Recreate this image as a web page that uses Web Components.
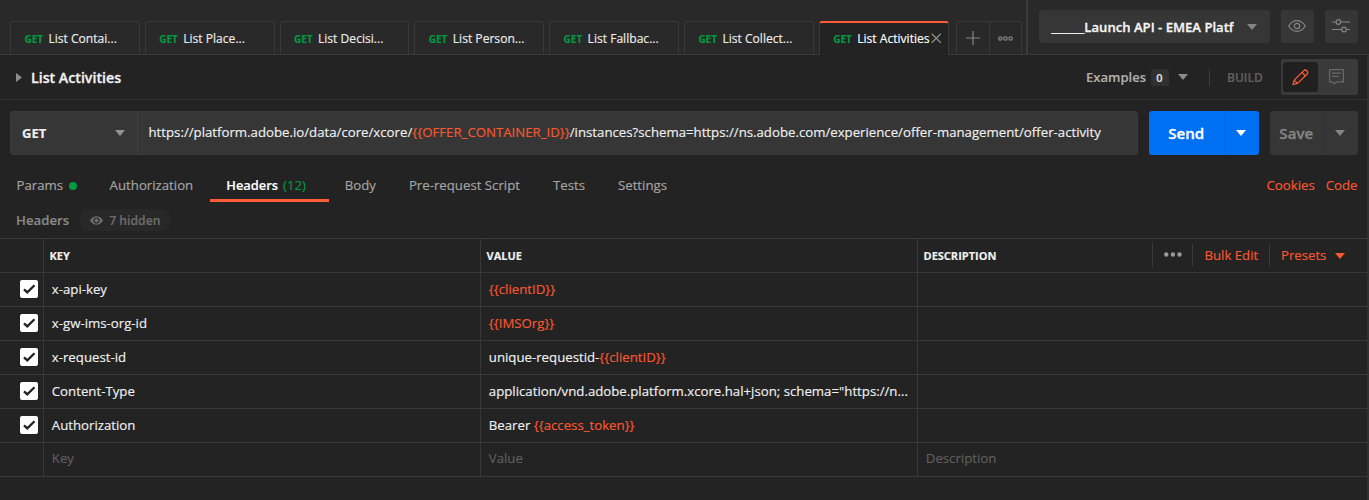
<!DOCTYPE html>
<html lang="en">
<head>
<meta charset="utf-8">
<title>List Activities</title>
<style>
html,body{margin:0;height:500px;overflow:hidden;background:#232323}
body{font:13.225px/18px "Open Sans",sans-serif;color:#f0f0f0;-webkit-text-stroke:.15px}
</style>
</head>
<body>
<api-client></api-client>
<script>
const define = (name, html) => customElements.define(name, class extends HTMLElement {
  connectedCallback() {
    if (this.shadowRoot) return;
    const t = document.createElement('template');
    t.innerHTML = typeof html === 'function' ? html(this) : html;
    this.attachShadow({mode: 'open'}).append(t.content.cloneNode(true));
  }
});

const icons = {
  caret: '<path d="M0 0h10L5 6z" fill="currentColor"/>',
  right: '<path d="M0 0v9l6-4.500z" fill="currentColor"/>',
  close: '<path d="M.7.700 9.800 9.800M9.800.700.700 9.800" stroke="currentColor" stroke-width="1.300"/>',
  plus: '<path d="M7 0v14M0 7h14" stroke="currentColor" stroke-width="1.200"/>',
  rings: '<g fill="none" stroke="currentColor" stroke-width="1.200"><circle cx="2.400" cy="2.500" r="1.700"/><circle cx="7.500" cy="2.500" r="1.700"/><circle cx="12.600" cy="2.500" r="1.700"/></g>',
  dots: '<g fill="currentColor"><circle cx="2.300" cy="2.500" r="2.200"/><circle cx="8.900" cy="2.500" r="2.200"/><circle cx="15.500" cy="2.500" r="2.200"/></g>',
  eye: '<g fill="none" stroke="currentColor" stroke-width="1.200"><path d="M.7 6C3 2.300 6 .7 9 .7s6 1.600 8.300 5.300C15 9.700 12 11.300 9 11.300S3 9.700.7 6z"/><circle cx="9" cy="6" r="2.700"/></g>',
  smalleye: '<path d="M0 4.500C1.700 1.500 4 .3 6.500.3s4.800 1.200 6.500 4.200c-1.700 3-4 4.200-6.500 4.200S1.700 7.500 0 4.500z" fill="currentColor"/><circle cx="6.500" cy="4.500" r="2.500" fill="none" stroke="#282828" stroke-width="1.200"/>',
  sliders: '<g fill="none" stroke="currentColor" stroke-width="1.200"><path d="M0 3h3.800M9 3h9M0 10.500h9.400M14.600 10.500H18"/><circle cx="6.400" cy="3" r="2.300"/><circle cx="12" cy="10.500" r="2.300"/></g>',
  pencil: '<g fill="none" stroke="currentColor" stroke-width="1.200" stroke-linejoin="round"><path d="M1 15.500 2.200 11.200 11.500 1.900a2.300 2.300 0 0 1 3.500 3.300L5.600 14.400z"/><path d="M10 3.500 13.400 6.800M2.200 11.200l3.400 3.200"/></g>',
  comment: '<g fill="none" stroke="currentColor" stroke-width="1.200"><path d="M.6.600h13.800v12.300H7.400L5.200 15l-2-2.100H.6z"/><path d="M3 4.200h9M3 7.300h6.500"/></g>',
  check: '<path d="M1 5.300 4.300 8.400 11.500 1.300" fill="none" stroke="currentColor" stroke-width="2.300"/>'
};
define('ui-icon', el => {
  const [w, h] = el.getAttribute('size').split(' ');
  return `<style>:host{display:block;flex:none;width:${w}px;height:${h}px}svg{display:block}</style>
  <svg width="${w}" height="${h}" viewBox="0 0 ${w} ${h}">${icons[el.getAttribute('name')]}</svg>`;
});

define('request-tab', `<style>
:host{display:flex;align-items:center;box-sizing:border-box;width:129.800px;height:33px;padding:1px 0 0 13.400px;border:1px solid #393939;border-bottom:0;border-radius:3px 3px 0 0;font-size:12.100px;white-space:nowrap;color:#ececec}
:host([active]){height:34px;margin-bottom:-1px;background:#232323;border-top:2px solid #ff5c35;padding-top:0;padding-bottom:1px;color:#fff}
b{font-size:10px;color:#009a42;width:24px;flex:none;padding-top:1px}
</style><b>GET</b><slot></slot><slot name="close"></slot>`);

define('tab-strip', `<style>
:host{display:flex;box-sizing:border-box;width:1026px;align-items:flex-end;padding-left:10px;height:54px}
.tabs{display:flex;gap:5px}
.tools{display:flex;margin-left:7.500px;box-sizing:border-box;width:66px;height:33px;border:1px solid #393939;border-bottom:0;border-radius:3px 3px 0 0;color:#858585}
.tools div{flex:1;display:flex;align-items:center;justify-content:center}
.tools div+div{border-left:1px solid #393939}
ui-icon[name=close]{color:#8c8c8c;margin-left:1.500px}
</style><div class="tabs">
<request-tab>List Contai...</request-tab><request-tab>List Place...</request-tab><request-tab>List Decisi...</request-tab><request-tab>List Person...</request-tab><request-tab>List Fallbac...</request-tab><request-tab>List Collect...</request-tab>
<request-tab active>List Activities<ui-icon slot="close" name="close" size="10.500 10.500"></ui-icon></request-tab></div>
<div class="tools"><div><ui-icon name="plus" size="14 14"></ui-icon></div><div><ui-icon name="rings" size="15 5"></ui-icon></div></div>`);

define('environment-bar', `<style>
:host{display:flex;flex:1;box-sizing:border-box;height:54px;border-left:2px solid #3b3b3b;padding:10px 11px 0;gap:11px}
div{display:flex;align-items:center;box-sizing:border-box;height:33px;border-radius:3px;background:#363636;color:#858585}
.env{width:231px;padding:0 13px 0 12px;justify-content:space-between}
.env span{width:183px;overflow:hidden;white-space:nowrap;font-weight:600;font-size:13.100px;color:#f5f5f5;-webkit-text-stroke:.3px}
.btn{width:33px;justify-content:center}
.btn ui-icon{margin-left:-1px;margin-top:-1px}
</style><div class="env"><span>______Launch API - EMEA Platf</span><ui-icon name="caret" size="10 6"></ui-icon></div>
<div class="btn"><ui-icon name="eye" size="18 12"></ui-icon></div><div class="btn"><ui-icon name="sliders" size="18 13.500"></ui-icon></div>`);

define('title-bar', `<style>
:host{display:flex;align-items:center;box-sizing:border-box;height:45px;border-bottom:1px solid #333;padding:0 9px 0 16px;color:#8c8c8c}
h1{margin:2px auto 0 9px;font-size:14.200px;font-weight:600;color:#f2f2f2;-webkit-text-stroke:.3px}
.ex{font-size:13px;font-weight:600;color:#b0b0b0}
.n{width:18px;height:17px;line-height:17px;text-align:center;margin:0 9px 0 4.500px;background:#303030;border-radius:2px;font-size:11px;font-weight:600;color:#e0e0e0}
.sep{width:1px;height:17px;background:#3c3c3c;margin:0 17.500px 0 21px}
.build{font-size:12px;font-weight:600;color:#606060;width:54px;padding-top:1px}
.modes{display:flex;align-items:center;box-sizing:border-box;width:77px;height:36px;padding:2px;background:#3a3a3a;border-radius:3px;color:#686868}
.modes div{width:36px;display:flex;justify-content:center}
.modes .on{width:35px;height:30px;align-items:center;background:#202020;border-radius:3px;color:#ff5c35}
</style><ui-icon name="right" size="6 9"></ui-icon><h1>List Activities</h1>
<span class="ex">Examples</span><span class="n">0</span><ui-icon name="caret" size="10 6"></ui-icon><i class="sep"></i><span class="build">BUILD</span>
<div class="modes"><div class="on"><ui-icon name="pencil" size="17 16.500"></ui-icon></div><div><ui-icon name="comment" size="15 16"></ui-icon></div></div>`);

define('split-button', `<style>
:host{display:flex;height:44px;border-radius:3px;background:#363636;color:#858585;font-size:15.100px;font-weight:600;overflow:hidden;-webkit-text-stroke:.3px}
:host([primary]){background:#0070f3;color:#fff}
.l{display:flex;align-items:center;justify-content:center;flex:1;padding-right:1.500px}
.c{display:flex;align-items:center;box-sizing:border-box;width:34px;padding-left:10px;border-left:1px solid #303030}
:host([primary]) .c{border-color:#0863cb}
</style><div class="l"><slot></slot></div><div class="c"><ui-icon name="caret" size="10 6"></ui-icon></div>`);

define('request-line', `<style>
:host{display:flex;padding:11px 9px 0 10px;gap:11px}
.box{display:flex;align-items:center;box-sizing:border-box;width:1128px;height:44px;background:#363636;border:1px solid #3b3b3b;border-radius:3px}
.m{display:flex;align-items:center;box-sizing:border-box;width:127px;height:42px;padding:0 12.500px 0 11px;justify-content:space-between;border-right:1px solid #414141;color:#929292}
.m b{font-size:13px;font-weight:700;color:#f0f0f0}
.u{padding-left:10.500px;margin-top:-2px;font-size:13.225px;white-space:nowrap}
.u em{font-style:normal;color:#f9582f}
.send{width:110px}.save{width:88px}
</style><div class="box"><div class="m"><b>GET</b><ui-icon name="caret" size="10 6"></ui-icon></div>
<div class="u">https://platform.adobe.io/data/core/xcore/<em>{{OFFER_CONTAINER_ID}}</em>/instances?schema=https://ns.adobe.com/experience/offer-management/offer-activity</div></div>
<split-button primary class="send">Send</split-button><split-button class="save">Save</split-button>`);

define('request-sections', `<style>
:host{display:flex;height:47px;padding:0 9.500px 0 0;color:#a5a5a5}
div{display:flex;align-items:center;box-sizing:border-box;height:47px;padding:13px 16.500px 0}
div:first-child{padding-left:14.400px;padding-right:16px}
.dot{width:8px;height:8px;border-radius:50%;background:#009a42;margin:1px 0 0 5.500px}
.on{border-bottom:3px solid #ff5c35;padding-top:16px;width:119px;font-weight:600;font-size:12.900px;color:#fff}
.on span{font-weight:400;font-size:13.200px;color:#009a42;margin-left:5px}
.on+div{padding-left:16px}
.links{margin-left:auto;padding-right:0;gap:11px;color:#f9582f}
</style><div>Params<i class="dot"></i></div><div>Authorization</div><div class="on">Headers<span>(12)</span></div><div>Body</div><div>Pre-request Script</div><div>Tests</div><div>Settings</div><div class="links"><span>Cookies</span><span>Code</span></div>`);

define('headers-summary', `<style>
:host{display:flex;align-items:center;height:36px;padding-left:16px;font-weight:600;color:#898989}
div{display:flex;align-items:center;box-sizing:border-box;width:92px;height:22px;margin-left:10px;padding:1px 0 0 11px;border-radius:11px;background:#282828;font-size:12.200px;color:#6d6d6d}
ui-icon{margin-right:6px}
</style>Headers<div><ui-icon name="smalleye" size="13 9"></ui-icon>7 hidden</div>`);

define('header-row', el => `<style>
:host{display:grid;grid-template-columns:43px 437px 437px 1fr;box-sizing:border-box;height:34px;border-bottom:1px solid #393939}
.cell{display:flex;align-items:center;min-width:0;box-sizing:border-box;padding-bottom:2px}
.cell+.cell{border-left:1px solid #393939;padding-left:7.800px}
:host([placeholder]){color:#5f5f5f}
:host([placeholder]) .cell{padding-bottom:4px}
.check{justify-content:flex-end;padding-right:5px;padding-bottom:1px}
.box{display:flex;align-items:center;justify-content:center;width:18px;height:18px;border-radius:2px;background:#fff;color:#222}
::slotted(span){white-space:nowrap}
</style><div class="cell check">${el.hasAttribute('placeholder') ? '' : '<div class="box"><ui-icon name="check" size="13 10"></ui-icon></div>'}</div>
<div class="cell"><slot name="key"></slot></div><div class="cell"><slot name="value"></slot></div><div class="cell"><slot name="description"></slot></div>`);

define('headers-table', `<style>
:host{display:block;border-top:1px solid #393939}
.head{display:grid;grid-template-columns:43px 437px 437px 1fr;box-sizing:border-box;height:34px;border-bottom:1px solid #393939;font-size:11px;font-weight:700}
.head>div{display:flex;align-items:center}
.head>div+div{border-left:1px solid #393939;padding-left:5.500px}
.tools{display:flex;align-items:center;margin-left:auto;height:33px;padding-bottom:1px;box-sizing:border-box;font-size:13.200px;font-weight:400;color:#f9582f}
.tools>*{display:flex;align-items:center;box-sizing:border-box;height:22px;border-left:1px solid #3b3b3b}
.more{width:40px;padding:0 0 2px 11px;height:24px;color:#9a9a9a}
.bulk{width:77px;padding-left:11.500px}
.presets{width:98px;padding-left:11px;gap:9px}
.presets ui-icon{margin-top:2px}
em{font-style:normal;color:#f9582f}
</style><div class="head"><div></div><div>KEY</div><div>VALUE</div><div>DESCRIPTION<div class="tools"><div class="more"><ui-icon name="dots" size="18 5"></ui-icon></div><div class="bulk">Bulk Edit</div><div class="presets">Presets<ui-icon name="caret" size="10 6"></ui-icon></div></div></div></div>
<header-row><span slot="key">x-api-key</span><span slot="value"><em>{{clientID}}</em></span></header-row>
<header-row><span slot="key">x-gw-ims-org-id</span><span slot="value"><em>{{IMSOrg}}</em></span></header-row>
<header-row><span slot="key">x-request-id</span><span slot="value">unique-requestid-<em>{{clientID}}</em></span></header-row>
<header-row><span slot="key">Content-Type</span><span slot="value">application/vnd.adobe.platform.xcore.hal+json; schema="https://n...</span></header-row>
<header-row><span slot="key">Authorization</span><span slot="value">Bearer <em>{{access_token}}</em></span></header-row>
<header-row placeholder><span slot="key">Key</span><span slot="value">Value</span><span slot="description">Description</span></header-row>`);

define('api-client', `<style>
:host{display:flex;flex-direction:column;box-sizing:border-box;width:1369px;height:500px;background:#232323}
header{display:flex;box-sizing:border-box;height:55px;background:#292929;border-bottom:1px solid #393939}
main{flex:1;border-right:2px solid #303030}
</style><header><tab-strip></tab-strip><environment-bar></environment-bar></header>
<main><title-bar></title-bar><request-line></request-line><request-sections></request-sections><headers-summary></headers-summary><headers-table></headers-table></main>`);
</script>
</body>
</html>
